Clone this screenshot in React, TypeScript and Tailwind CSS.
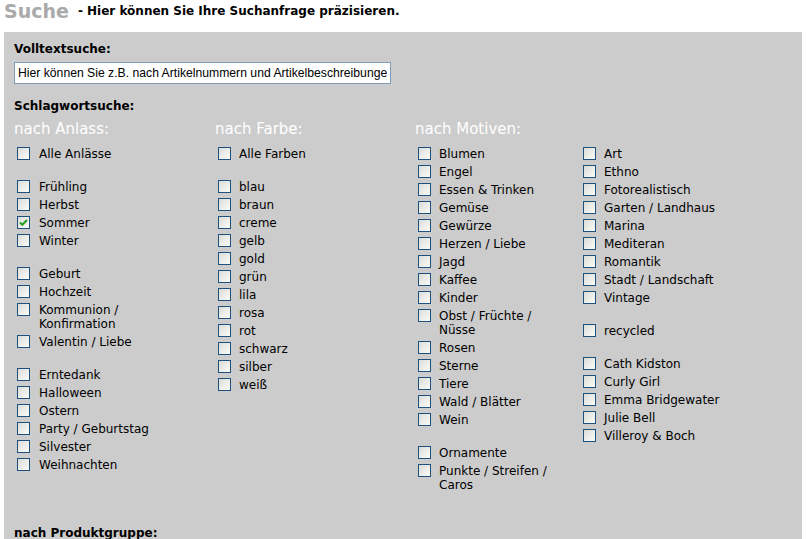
import React from "react";

type Item = { label: React.ReactNode; checked?: boolean };

const anlass: Item[][] = [
  [{ label: "Alle Anlässe" }],
  [{ label: "Frühling" }, { label: "Herbst" }, { label: "Sommer", checked: true }, { label: "Winter" }],
  [
    { label: "Geburt" },
    { label: "Hochzeit" },
    { label: <>Kommunion /<br />Konfirmation</> },
    { label: "Valentin / Liebe" },
  ],
  [
    { label: "Erntedank" },
    { label: "Halloween" },
    { label: "Ostern" },
    { label: "Party / Geburtstag" },
    { label: "Silvester" },
    { label: "Weihnachten" },
  ],
];

const farbe: Item[][] = [
  [{ label: "Alle Farben" }],
  ["blau", "braun", "creme", "gelb", "gold", "grün", "lila", "rosa", "rot", "schwarz", "silber", "weiß"].map((l) => ({
    label: l,
  })),
];

const motiveA: Item[][] = [
  [
    { label: "Blumen" },
    { label: "Engel" },
    { label: "Essen & Trinken" },
    { label: "Gemüse" },
    { label: "Gewürze" },
    { label: "Herzen / Liebe" },
    { label: "Jagd" },
    { label: "Kaffee" },
    { label: "Kinder" },
    { label: <>Obst / Früchte /<br />Nüsse</> },
    { label: "Rosen" },
    { label: "Sterne" },
    { label: "Tiere" },
    { label: "Wald / Blätter" },
    { label: "Wein" },
  ],
  [{ label: "Ornamente" }, { label: <>Punkte / Streifen /<br />Caros</> }],
];

const motiveB: Item[][] = [
  ["Art", "Ethno", "Fotorealistisch", "Garten / Landhaus", "Marina", "Mediteran", "Romantik", "Stadt / Landschaft", "Vintage"].map(
    (l) => ({ label: l })
  ),
  [{ label: "recycled" }],
  ["Cath Kidston", "Curly Girl", "Emma Bridgewater", "Julie Bell", "Villeroy & Boch"].map((l) => ({ label: l })),
];

const Box = ({ checked }: { checked?: boolean }) => (
  <span className="w-[13px] h-[13px] shrink-0 border border-[#1c5180] bg-linear-to-br from-[#dcdcd7] to-[#fbfbf9] flex items-center justify-center">
    {checked && (
      <svg width="9" height="9" viewBox="0 0 9 9">
        <path d="M1 4.5 L3.3 6.8 L8 2" stroke="#21a121" strokeWidth="2" fill="none" />
      </svg>
    )}
  </span>
);

const Groups = ({ groups, gap = "ml-[8px]" }: { groups: Item[][]; gap?: string }) => (
  <div className="flex flex-col">
    {groups.map((g, gi) => (
      <div key={gi} className={gi > 0 ? "mt-[15px]" : ""}>
        {g.map((it, i) => (
          <div key={i} className="flex items-start py-[2px] pl-[3px]">
            <Box checked={it.checked} />
            <span className={`${gap} leading-[14px] text-[12px] text-black whitespace-nowrap`}>{it.label}</span>
          </div>
        ))}
      </div>
    ))}
  </div>
);

const Heading = ({ children }: { children: React.ReactNode }) => (
  <div className="text-[15px] leading-[18px] text-white mt-[7px] mb-[7px] h-[18px]">{children}</div>
);

export default function App() {
  return (
    <div className="w-[808px] h-[539px] overflow-hidden bg-white" style={{ fontFamily: '"DejaVu Sans", Verdana, sans-serif' }}>
      <div className="h-[32px] flex items-start pl-[4px] pt-px">
        <span className="text-[19px] leading-[20px] font-bold text-[#aaaaaa]">Suche</span>
        <span className="ml-[9px] text-[12px] leading-[20px] font-bold text-black">
          - Hier können Sie Ihre Suchanfrage präzisieren.
        </span>
      </div>
      <div className="ml-[4px] w-[798px] bg-[#cccccc] px-[10px] pt-[10px] pb-4">
        <div className="text-[12px] leading-[14px] font-bold text-black">Volltextsuche:</div>
        <input
          readOnly
          defaultValue="Hier können Sie z.B. nach Artikelnummern und Artikelbeschreibungen suchen"
          className="mt-[6px] block w-[377px] h-[22px] border border-[#7f9db9] bg-white px-[3px] text-[12.2px] text-black outline-none"
          style={{ fontFamily: '"Liberation Sans", Arial, sans-serif' }}
        />
        <div className="mt-[15px] text-[12px] leading-[14px] font-bold text-black">Schlagwortsuche:</div>
        <div className="flex">
          <div className="w-[201px]">
            <Heading>nach Anlass:</Heading>
            <Groups groups={anlass} gap="ml-[9px]" />
          </div>
          <div className="w-[200px]">
            <Heading>nach Farbe:</Heading>
            <Groups groups={farbe} />
          </div>
          <div className="flex-1">
            <Heading>nach Motiven:</Heading>
            <div className="flex">
              <div className="w-[165px]">
                <Groups groups={motiveA} />
              </div>
              <div className="flex-1">
                <Groups groups={motiveB} />
              </div>
            </div>
          </div>
        </div>
        <div className="mt-[32px] text-[12px] leading-[14px] font-bold text-black">nach Produktgruppe:</div>
      </div>
    </div>
  );
}
